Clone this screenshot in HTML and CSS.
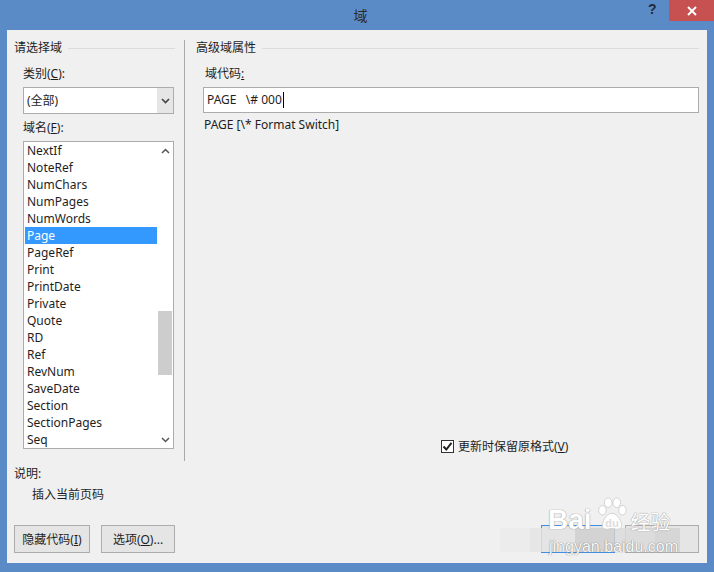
FILE: index.html
```html
<!DOCTYPE html>
<html>
<head>
<meta charset="utf-8">
<link rel="stylesheet" href="styles.css">
</head>
<body>
<div class="window">
  <div class="titlebar">
    <div class="title">域</div>
    <div class="help">?</div>
    <div class="close">
      <svg width="12" height="12" viewBox="0 0 12 12"><path d="M2 2 L10 10 M10 2 L2 10" stroke="#fff" stroke-width="2"/></svg>
    </div>
  </div>
  <div class="client">
    <div class="main">
      <div class="left">
        <div class="group-title"><span>请选择域</span><i class="rule"></i></div>
        <div class="label">类别(<u>C</u>):</div>
        <div class="combo">
          <div class="combo-text">(全部)</div>
          <div class="combo-btn">
            <svg width="9" height="6" viewBox="0 0 9 6"><path d="M1 1 L4.5 4.5 L8 1" stroke="#444" stroke-width="1.6" fill="none"/></svg>
          </div>
        </div>
        <div class="label label2">域名(<u>F</u>):</div>
        <div class="listbox">
          <div class="items">
            <div class="item">NextIf</div>
            <div class="item">NoteRef</div>
            <div class="item">NumChars</div>
            <div class="item">NumPages</div>
            <div class="item">NumWords</div>
            <div class="item selected">Page</div>
            <div class="item">PageRef</div>
            <div class="item">Print</div>
            <div class="item">PrintDate</div>
            <div class="item">Private</div>
            <div class="item">Quote</div>
            <div class="item">RD</div>
            <div class="item">Ref</div>
            <div class="item">RevNum</div>
            <div class="item">SaveDate</div>
            <div class="item">Section</div>
            <div class="item">SectionPages</div>
            <div class="item">Seq</div>
          </div>
          <div class="scrollbar">
            <div class="arrow"><svg width="9" height="6" viewBox="0 0 9 6"><path d="M1 5 L4.5 1.5 L8 5" stroke="#555" stroke-width="1.5" fill="none"/></svg></div>
            <div class="track"><div class="thumb"></div></div>
            <div class="arrow"><svg width="9" height="6" viewBox="0 0 9 6"><path d="M1 1 L4.5 4.5 L8 1" stroke="#555" stroke-width="1.5" fill="none"/></svg></div>
          </div>
        </div>
      </div>
      <div class="divider"></div>
      <div class="right">
        <div class="group-title"><span>高级域属性</span><i class="rule"></i></div>
        <div class="label">域代码<u>:</u></div>
        <div class="textbox">PAGE&nbsp;&nbsp;&nbsp;\# 000<span class="caret"></span></div>
        <div class="syntax">PAGE [\* Format Switch]</div>
        <label class="check">
          <span class="box"><svg width="11" height="11" viewBox="0 0 11 11"><path d="M1.5 5.5 L4.3 8.5 L9.5 1.8" stroke="#222" stroke-width="2" fill="none"/></svg></span>
          <span>更新时保留原格式(<u>V</u>)</span>
        </label>
      </div>
    </div>
    <div class="desc-label">说明:</div>
    <div class="desc">插入当前页码</div>
    <div class="buttons">
      <div class="btn-group">
        <div class="btn w76">隐藏代码(<u>I</u>)</div>
        <div class="btn">选项(<u>O</u>)...</div>
      </div>
      <div class="btn-group gap10">
        <div class="btn default"></div>
        <div class="btn"></div>
      </div>
    </div>
    <div class="mosaic">
      <i style="left:0;width:30px;background:#ebebeb"></i>
      <i style="left:30px;width:30px;background:#e4e4e4"></i>
      <i style="left:75px;width:40px;background:#d0d0d0"></i>
      <i style="left:115px;width:40px;background:#dadada"></i>
      <i style="left:155px;width:25px;background:#d4d4d4"></i>
      <i style="left:215px;width:40px;background:#cecece"></i>
      <i style="left:255px;width:35px;background:#dedede"></i>
    </div>
    <div class="watermark">
      <div class="wm-top">
        <span class="wm-bai">Bai</span>
        <svg class="paw" width="34" height="38" viewBox="0 0 34 40">
          <ellipse cx="7" cy="14" rx="4" ry="5" fill="#fff" stroke="#c8c8c8" stroke-width="0.8"/>
          <ellipse cx="13" cy="6" rx="4" ry="5" fill="#fff" stroke="#c8c8c8" stroke-width="0.8"/>
          <ellipse cx="22" cy="6" rx="4" ry="5" fill="#fff" stroke="#c8c8c8" stroke-width="0.8"/>
          <ellipse cx="28" cy="14" rx="4" ry="5" fill="#fff" stroke="#c8c8c8" stroke-width="0.8"/>
          <path d="M17 17 C11 17 6 27 7 31 C8 35 13 34 17 33 C21 34 26 35 27 31 C28 27 23 17 17 17 Z" fill="#fff" stroke="#c8c8c8" stroke-width="0.8"/>
          <text x="17" y="32" text-anchor="middle" font-family="Liberation Sans, sans-serif" font-size="12" font-weight="bold" fill="#ddd">du</text>
        </svg>
        <span class="wm-jy">经验</span>
      </div>
      <div class="wm-url">jingyan.baidu.com</div>
    </div>
  </div>
</div>
</body>
</html>
```

FILE: styles.css
```css
* { box-sizing: border-box; }
html, body { margin: 0; padding: 0; }
body {
  width: 714px;
  height: 572px;
  overflow: hidden;
  font-family: "Noto Sans", "Noto Sans CJK SC", sans-serif;
  font-size: 12px;
  color: #1e1e1e;
}
u { text-decoration: underline; text-underline-offset: 1px; }

.window {
  width: 714px;
  height: 572px;
  background: #5b8bc6;
  padding: 0 7px 9px 7px;
  display: flex;
  flex-direction: column;
  overflow: hidden;
}
.titlebar {
  height: 30px;
  flex: none;
  display: flex;
  align-items: center;
}
.title {
  flex: 1;
  text-align: center;
  font-size: 14px;
  color: #2a2a2a;
  padding-left: 66px;
}
.help {
  width: 20px;
  font-family: "Liberation Sans", sans-serif;
  font-weight: bold;
  font-size: 14px;
  color: #1f2a3a;
  margin-top: -12px;
  margin-right: 1px;
}
.close {
  width: 45px;
  height: 21px;
  align-self: flex-start;
  background: #c75050;
  display: flex;
  align-items: center;
  justify-content: center;
  margin-right: -7px;
}

.client {
  flex: 1;
  background: #f0f0f0;
  padding: 10px 8px 0 7px;
  position: relative;
  overflow: hidden;
}
.main {
  height: 421px;
  display: flex;
}
.left {
  width: 161px;
  display: flex;
  flex-direction: column;
}
.group-title {
  height: 16px;
  line-height: 16px;
  display: flex;
  align-items: center;
}
.group-title .rule {
  flex: 1;
  border-top: 1px solid #dcdcdc;
  margin-left: 6px;
}
.label {
  height: 16px;
  line-height: 16px;
  margin-top: 10px;
  margin-left: 9px;
}
.label2 { margin-top: 6px; }
.combo {
  margin-top: 5px;
  margin-left: 9px;
  width: 151px;
  height: 27px;
  border: 1px solid #acacac;
  background: #fff;
  display: flex;
}
.combo-text {
  flex: 1;
  padding-left: 3px;
  line-height: 25px;
}
.combo-btn {
  width: 16px;
  background: #e6e6e6;
  display: flex;
  align-items: center;
  justify-content: center;
}
.listbox {
  margin-top: 5px;
  margin-left: 9px;
  width: 151px;
  height: 308px;
  border: 1px solid #acacac;
  background: #fff;
  display: flex;
}
.items {
  flex: 1;
  padding: 0 0 0 1px;
}
.item {
  height: 17px;
  line-height: 17px;
  padding-left: 2px;
  white-space: nowrap;
}
.item.selected {
  background: #3399ff;
  color: #fff;
}
.scrollbar {
  width: 16px;
  display: flex;
  flex-direction: column;
  background: #fff;
}
.arrow {
  height: 17px;
  display: flex;
  align-items: center;
  justify-content: center;
}
.track {
  flex: 1;
  padding-top: 152px;
  padding-left: 1px;
}
.thumb {
  width: 14px;
  height: 64px;
  background: #cdcdcd;
}
.divider {
  width: 1px;
  background: #a9a9a9;
  margin-left: 9px;
}
.right {
  flex: 1;
  margin-left: 11px;
  display: flex;
  flex-direction: column;
}
.textbox {
  margin-top: 5px;
  margin-left: 7px;
  height: 26px;
  border: 1px solid #acacac;
  background: #fff;
  line-height: 24px;
  padding-left: 3px;
  white-space: nowrap;
  display: flex;
  align-items: center;
}
.caret {
  display: inline-block;
  width: 1px;
  height: 16px;
  background: #000;
  margin-left: 1px;
}
.syntax {
  margin-top: 4px;
  margin-left: 8px;
  height: 16px;
  line-height: 16px;
}
.check {
  margin-top: auto;
  margin-bottom: 7px;
  margin-left: 245px;
  display: flex;
  align-items: center;
  height: 16px;
}
.check .box {
  width: 13px;
  height: 13px;
  border: 1px solid #333;
  background: #fff;
  display: flex;
  align-items: center;
  justify-content: center;
  margin-right: 4px;
}
.desc-label {
  margin-top: 5px;
  height: 16px;
  line-height: 16px;
}
.desc {
  margin-top: 5px;
  margin-left: 18px;
  height: 16px;
  line-height: 16px;
}
.buttons {
  margin-top: 22px;
  display: flex;
  justify-content: space-between;
}
.btn-group {
  display: flex;
  gap: 11px;
}
.btn-group.gap10 { gap: 10px; }
.btn {
  width: 74px;
  height: 28px;
  border: 1px solid #adadad;
  background: #e5e5e5;
  display: flex;
  align-items: center;
  justify-content: center;
}
.btn.w76 { width: 76px; }
.btn.default { border-color: #3c8fe6; }

.mosaic {
  position: absolute;
  left: 493px;
  top: 498px;
  width: 200px;
  height: 24px;
}
.mosaic i {
  position: absolute;
  top: 0;
  height: 24px;
  opacity: 0.85;
}
.watermark {
  position: absolute;
  left: 533px;
  top: 460px;
  width: 150px;
  color: #fff;
  font-family: "Liberation Sans", "Noto Sans CJK SC", sans-serif;
}
.wm-top {
  display: flex;
  align-items: flex-end;
  height: 44px;
}
.wm-bai {
  font-size: 28px;
  font-weight: bold;
  line-height: 28px;
  color: #fff;
  text-shadow: 0 0 1px #999, 0 0 1px #999;
  margin-left: 8px;
}
.paw { margin-left: 3px; margin-bottom: -1px; }
.wm-jy {
  font-size: 20px;
  line-height: 24px;
  margin-left: 2px;
  text-shadow: 0 0 1px #999, 0 0 1px #999;
  font-family: "Noto Sans CJK SC", sans-serif;
}
.wm-url {
  font-size: 16px;
  margin-left: 9px;
  margin-top: 4px;
  color: #f8f8f8;
  text-shadow: 0 0 1px #888, 0 0 1px #888;
}
```
